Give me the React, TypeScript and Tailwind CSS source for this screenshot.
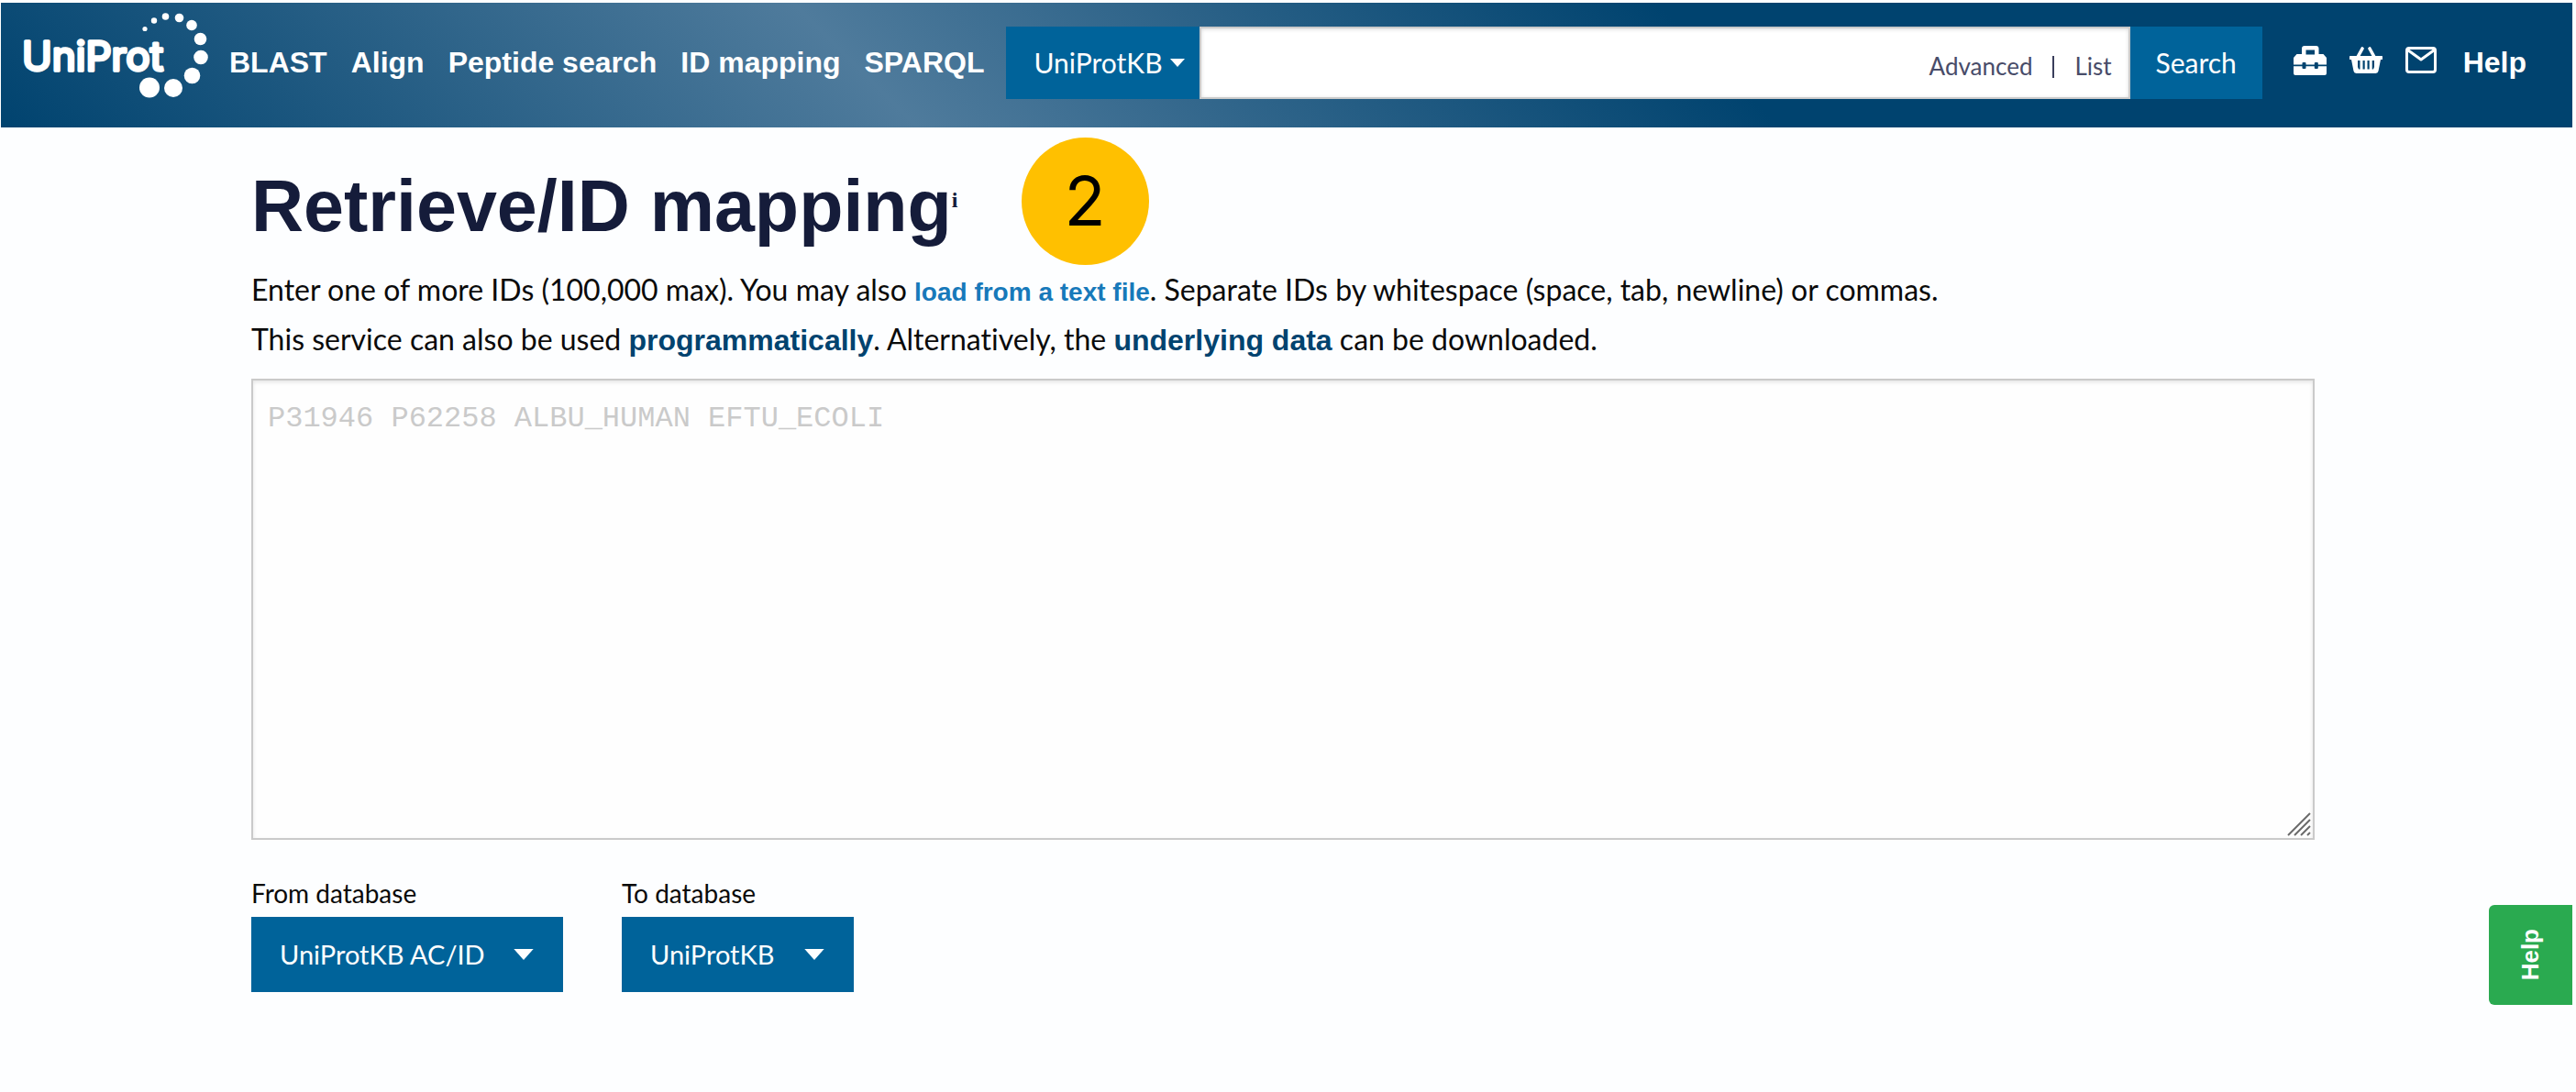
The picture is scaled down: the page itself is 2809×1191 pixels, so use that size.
import { ReactNode } from "react";

const navLinks = ["BLAST", "Align", "Peptide search", "ID mapping", "SPARQL"];

function Logo() {
  return (
    <svg viewBox="0 0 210 110" className="h-[110px] w-[210px] shrink-0 text-white" role="img" aria-label="UniProt" fill="currentColor">
      <text x="0" y="63" fontFamily="Inter, sans-serif" fontSize="44" stroke="currentColor" strokeWidth="3.5" strokeLinejoin="round">
        UniProt
      </text>
      <circle cx="134" cy="17.500" r="2.600" />
      <circle cx="144" cy="8.500" r="3.200" />
      <circle cx="156.500" cy="4" r="3.800" />
      <circle cx="171.500" cy="5.500" r="4.800" />
      <circle cx="185" cy="13.500" r="5.800" />
      <circle cx="194.500" cy="28.500" r="6.800" />
      <circle cx="195" cy="48.500" r="7.800" />
      <circle cx="185.500" cy="68.500" r="8.800" />
      <circle cx="165" cy="82" r="10" />
      <circle cx="139" cy="81.500" r="11" />
    </svg>
  );
}

function Caret({ className }: { className: string }) {
  return (
    <svg viewBox="0 0 16 9" className={className} fill="currentColor" aria-hidden="true">
      <path d="M0 0h16L8 9z" />
    </svg>
  );
}

function ToolboxIcon() {
  return (
    <svg viewBox="0 0 36 32" className="h-8 w-9" fill="currentColor" aria-hidden="true">
      <path
        fillRule="evenodd"
        d="M9 9V3a3 3 0 0 1 3-3h12.500a3 3 0 0 1 3 3v6h5l3.500 4v17a2 2 0 0 1-2 2H2a2 2 0 0 1-2-2V13l3.500-4zm4.500 0.500h9.500V4.500h-9.500z"
      />
      <path d="M0 21.300h36" stroke="#00436f" strokeWidth="1.700" />
      <rect x="9.500" y="18" width="4" height="7" rx="1" fill="#00436f" />
      <rect x="22.800" y="18" width="4" height="7" rx="1" fill="#00436f" />
    </svg>
  );
}

function BasketIcon() {
  return (
    <svg viewBox="0 0 36 29" className="h-[29px] w-9" fill="none" aria-hidden="true">
      <path d="M14 2 8.500 12M22 2l5.500 10" stroke="currentColor" strokeWidth="3.600" strokeLinecap="round" />
      <path
        fill="currentColor"
        fillRule="evenodd"
        d="M1.200 10h33.600a1.200 1.200 0 0 1 0 4H34l-2.500 12.500a3 3 0 0 1-3 2.500h-21a3 3 0 0 1-3-2.500L2 14h-.8a1.200 1.200 0 0 1 0-4zM9 15v7l1 2.500h1.500V15zM14.500 15v9.500h2.200V15zM19.500 15v9.500h2.200V15zM24.700 15v9.500H26l1-2.500V15z"
      />
    </svg>
  );
}

function MailIcon() {
  return (
    <svg viewBox="0 0 34 29" className="h-[29px] w-[34px]" fill="none" stroke="currentColor" strokeWidth="3" strokeLinejoin="round" aria-hidden="true">
      <rect x="1.500" y="1.500" width="31" height="26" rx="2.500" />
      <path d="M2.500 3.500 17 14l14.500-10.500" />
    </svg>
  );
}

function IconButton({ label, children }: { label: string; children: ReactNode }) {
  return (
    <button type="button" aria-label={label} className="flex items-center">
      {children}
    </button>
  );
}

function DatabasePicker({ id, label, value, width }: { id: string; label: string; value: string; width: string }) {
  return (
    <div className="flex flex-col gap-1">
      <label htmlFor={id} className="text-[28px] leading-[44px]">
        {label}
      </label>
      <div className={`relative flex items-center text-white ${width}`}>
        <select id={id} className="h-[82px] w-full appearance-none bg-[#00639a] pl-[31px] text-[29px]">
          <option>{value}</option>
        </select>
        <Caret className="pointer-events-none absolute right-8 h-3 w-[22px]" />
      </div>
    </div>
  );
}

export default function App() {
  return (
    <div className="relative min-h-screen bg-[#fdfeff] pt-[3px] font-['Lato',sans-serif] text-[#0a0a0a] [font-variant-ligatures:none]">
      <header className="mr-1 ml-px flex h-[136px] items-start bg-[linear-gradient(45deg,#00436f_0%,#4f7b9c_34%,#00436f_66%)] pl-[23px] text-white">
        <div className="pt-[11px]">
          <Logo />
        </div>
        <nav className="ml-4 flex h-[130px] items-center gap-[26px] font-['Liberation_Sans',sans-serif] text-[32px] font-bold">
          {navLinks.map((name) => (
            <a key={name} href="#" className="whitespace-nowrap">
              {name}
            </a>
          ))}
        </nav>
        <form className="mt-[26px] ml-6 flex h-[79px] grow" onSubmit={(e) => e.preventDefault()}>
          <div className="relative flex w-[211px] shrink-0 items-center">
            <select aria-label="Database" className="h-full w-full appearance-none bg-[#00639a] pl-[30px] text-[30px]">
              <option>UniProtKB</option>
            </select>
            <Caret className="pointer-events-none absolute right-4 h-[9px] w-4" />
          </div>
          <div className="flex grow border-2 border-[#cacaca] bg-white pr-[18px] text-[26px] text-[#484c69] shadow-[inset_0_1px_4px_rgba(10,10,10,0.15)]">
            <input aria-label="Search query" className="min-w-0 grow bg-transparent px-4 text-[30px] outline-none" />
            <div className="flex items-center pt-2">
              <a href="#">Advanced</a>
              <span className="mx-[22px] h-6 w-[2px] bg-[#3a3e5c]" />
              <a href="#">List</a>
            </div>
          </div>
          <button type="submit" className="w-[144px] shrink-0 bg-[#00639a] text-[30px]">
            Search
          </button>
        </form>
        <div className="mr-[50px] ml-[34px] flex h-[125px] shrink-0 items-center gap-[25px]">
          <IconButton label="Tools">
            <ToolboxIcon />
          </IconButton>
          <IconButton label="Basket">
            <BasketIcon />
          </IconButton>
          <IconButton label="Contact">
            <MailIcon />
          </IconButton>
          <a href="#" className="pt-1 pl-1 font-['Liberation_Sans',sans-serif] text-[32px] font-bold">
            Help
          </a>
        </div>
      </header>

      <main className="ml-[274px] mr-[285px]">
        <div className="flex items-start pt-[11px]">
          <h1 className="pt-[29px] font-['Liberation_Sans',sans-serif] text-[79px] leading-[92px] font-bold text-[#151c3a]">
            Retrieve/ID mapping
          </h1>
          <sup className="top-0 mt-[54px] font-['Liberation_Serif',serif] text-[24px] leading-7 font-bold text-[#151c3a]">i</sup>
          <div className="ml-[69px] flex size-[139px] items-center justify-center rounded-full bg-[#ffc000] font-['Inter',sans-serif] text-[74px] text-black">
            2
          </div>
        </div>
        <p className="text-[32px] leading-[54px]">
          Enter one of more IDs (100,000 max). You may also{" "}
          <button type="button" className="font-['Liberation_Sans',sans-serif] text-[28px] leading-8 font-bold text-[#1779ba]">
            load from a text file
          </button>
          . Separate IDs by whitespace (space, tab, newline) or commas.
          <br />
          This service can also be used{" "}
          <a href="#" className="font-['Liberation_Sans',sans-serif] font-bold text-[#00436f]">
            programmatically
          </a>
          . Alternatively, the{" "}
          <a href="#" className="font-['Liberation_Sans',sans-serif] font-bold text-[#00436f]">
            underlying data
          </a>{" "}
          can be downloaded.
        </p>
        <div className="relative mt-[15px]">
          <textarea
            aria-label="Identifiers"
            placeholder="P31946 P62258 ALBU_HUMAN EFTU_ECOLI"
            className="block h-[503px] w-full resize-none border-2 border-[#cacaca] bg-[#fefefe] px-4 py-[18px] font-['Liberation_Mono',monospace] text-[32px] shadow-[inset_0_2px_4px_rgba(10,10,10,0.1)] placeholder:text-[#cacaca]"
          />
          <svg viewBox="0 0 26 26" className="absolute right-1 bottom-1 size-[26px]" stroke="#6b6b6b" strokeWidth="2" aria-hidden="true">
            <path d="M1 25 25 1M8 25 25 8M15 25l10-10M22 25l3-3" />
          </svg>
        </div>
        <div className="mt-9 flex gap-16">
          <DatabasePicker id="from-db" label="From database" value="UniProtKB AC/ID" width="w-[340px]" />
          <DatabasePicker id="to-db" label="To database" value="UniProtKB" width="w-[253px]" />
        </div>
      </main>

      <button
        type="button"
        className="absolute right-1 bottom-[95px] flex h-[109px] w-[91px] items-center justify-center rounded-l-md bg-[#2aaa50] font-['Liberation_Sans',sans-serif] text-[26px] font-bold text-white"
      >
        <span className="rotate-180 [writing-mode:vertical-rl]">Help</span>
      </button>
    </div>
  );
}
